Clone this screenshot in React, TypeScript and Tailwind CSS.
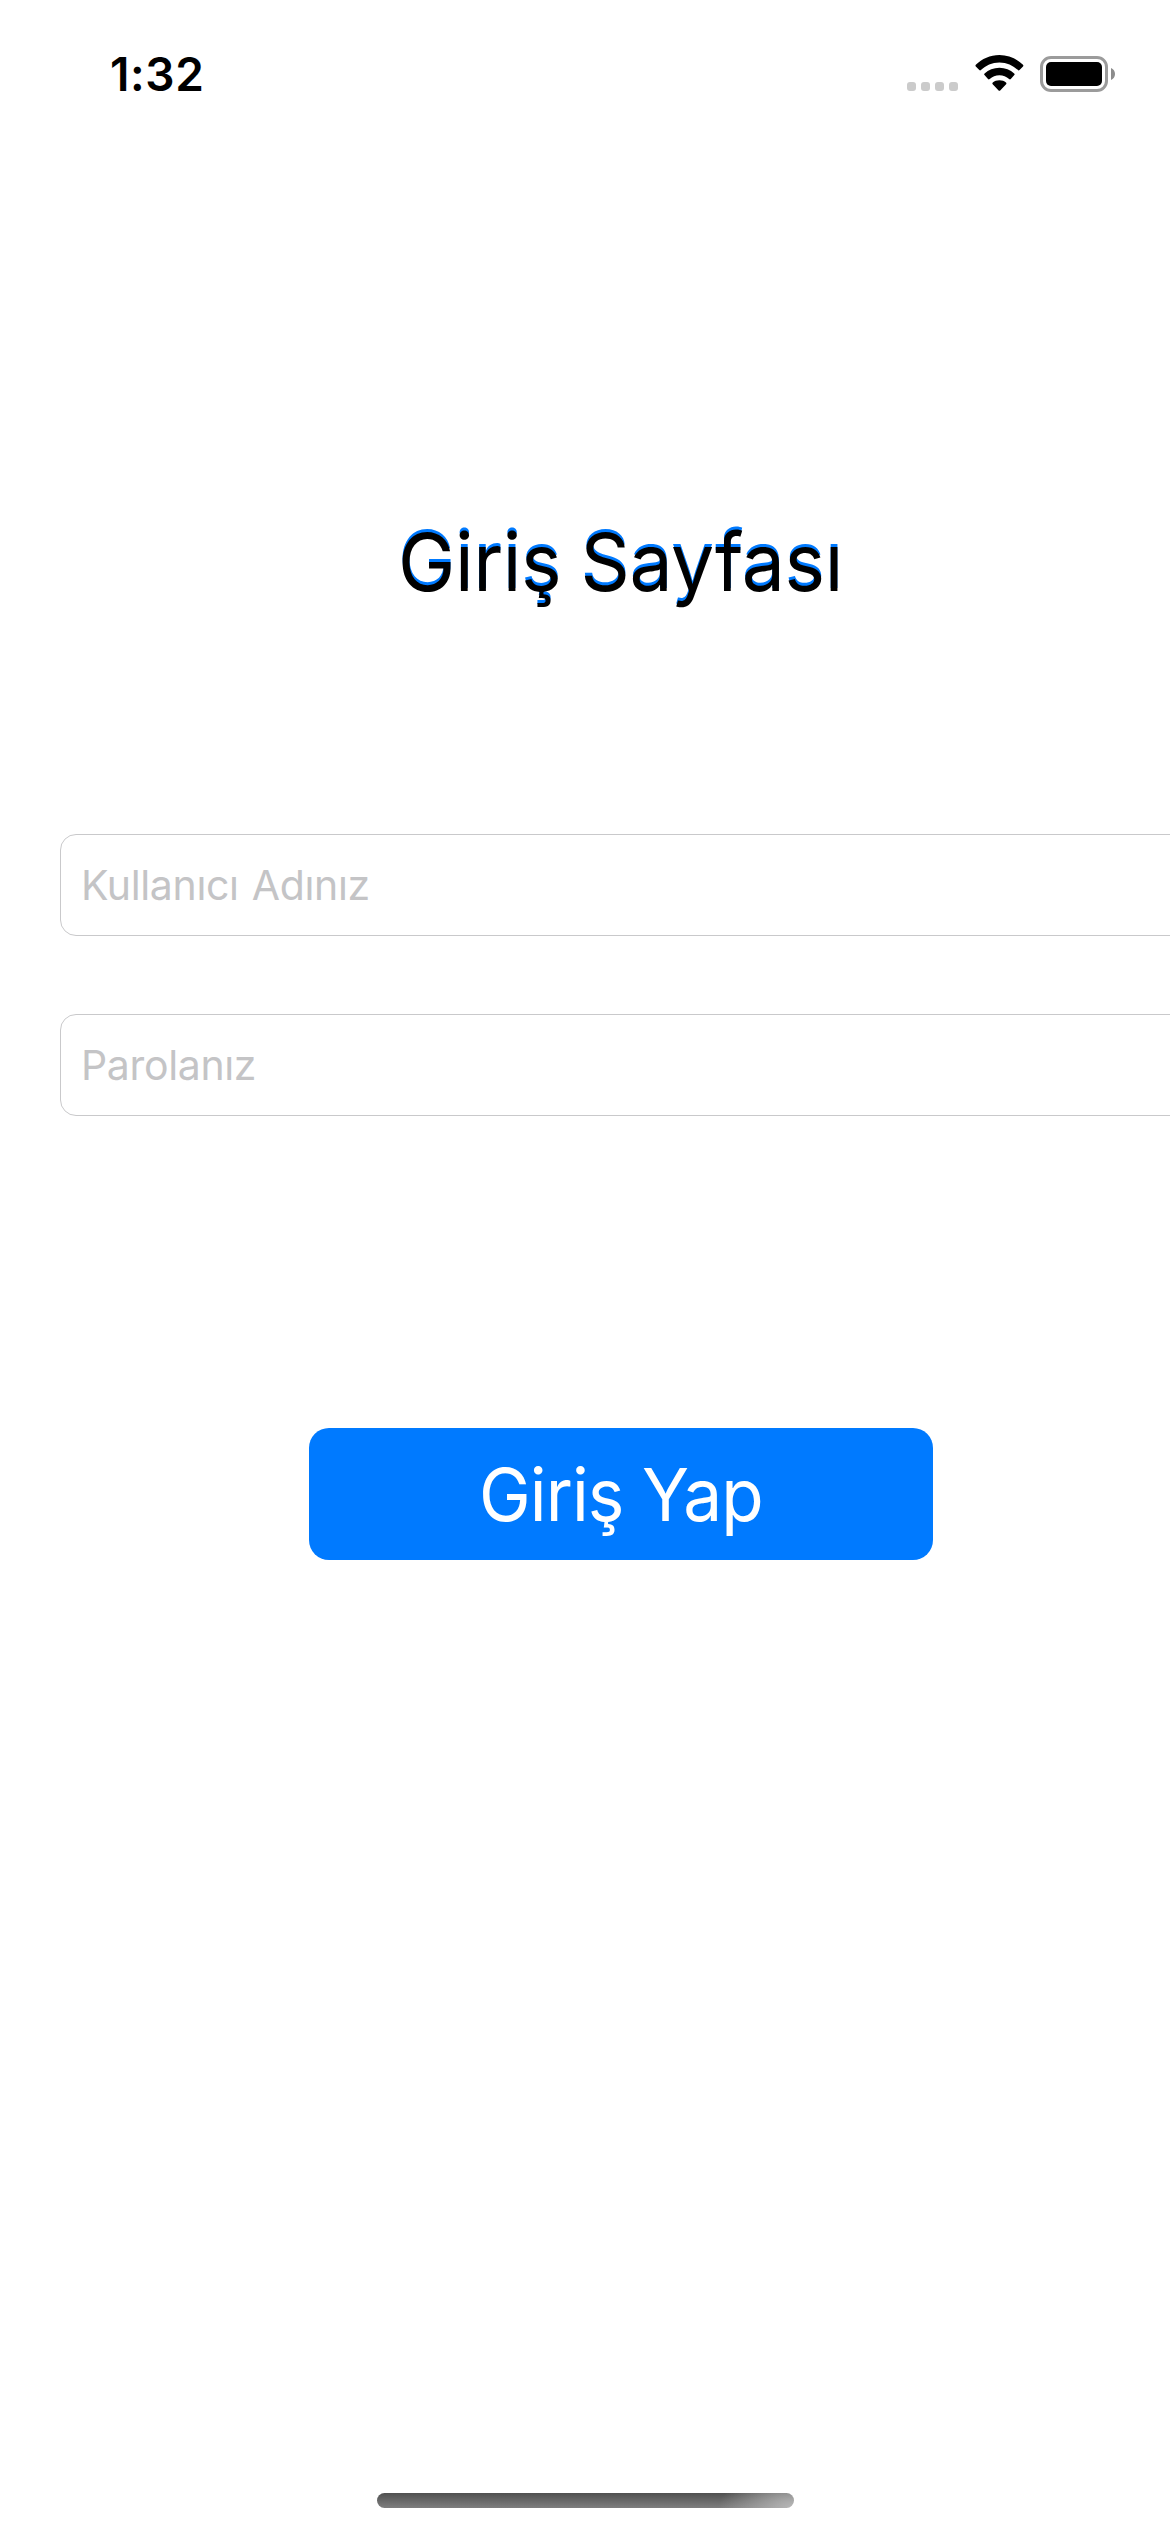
function SignalDots() {
  return (
    <div className="flex gap-[5px]">
      {[0, 1, 2, 3].map((i) => (
        <span key={i} className="size-[9px] rounded-[3px] bg-[#cbcbcb]" />
      ))}
    </div>
  );
}

function WifiIcon() {
  return (
    <svg className="h-[36px] w-[49px]" viewBox="0 0 49 36" fill="#000">
      <path d="M24.4 0C33.6 0 41.9 3.9 48 9.8C48.5 10.3 48.5 10.9 48 11.4L44.5 15C44 15.5 43.400 15.500 42.900 15C38 10.400 31.800 7.400 24.400 7.400C17 7.400 10.800 10.400 5.900 15C5.400 15.500 4.800 15.500 4.300 15L.8 11.400C.3 10.900 .3 10.300 .8 9.800C6.900 3.900 15.200 0 24.400 0Z" />
      <path d="M24.400 12.800C30.200 12.800 35.300 14.900 39.200 18.500C39.800 19 39.800 19.600 39.300 20.100L35.800 24C35.300 24.500 34.700 24.500 34.100 24C31.500 21.700 28.100 20.300 24.400 20.300C20.700 20.300 17.300 21.700 14.700 24C14.100 24.500 13.500 24.500 13 24L9.500 20.100C9 19.600 9 19 9.600 18.500C13.500 14.900 18.600 12.800 24.400 12.800Z" />
      <path d="M24.400 25.300C27.100 25.300 29.300 26.100 31 27.600C31.600 28.100 31.600 28.700 31.100 29.200L25.200 35.400C24.700 35.900 24.100 35.900 23.600 35.400L17.700 29.200C17.200 28.700 17.200 28.100 17.800 27.600C19.500 26.100 21.700 25.300 24.400 25.300Z" />
    </svg>
  );
}

function BatteryIcon() {
  return (
    <div className="flex items-center gap-[3px]">
      <div className="h-[36px] w-[68px] rounded-[11px] border-[3px] border-[#9b9b9b] p-[3px]">
        <div className="h-full w-full rounded-[5px] bg-black" />
      </div>
      <svg className="h-[12px] w-[4px]" viewBox="0 0 4 12" fill="#8c8c8c">
        <path d="M0 0C2.400 1 4 3.300 4 6S2.400 11 0 12Z" />
      </svg>
    </div>
  );
}

function StatusBar() {
  return (
    <header className="flex h-[102px] items-start justify-between pt-[46px] pr-[55px] pl-[110px]">
      <time className="text-[46px] leading-[56px] font-semibold tracking-[0.6px]">1:32</time>
      <div className="flex items-start pt-[9px]">
        <div className="mt-[27px] mr-[17px]">
          <SignalDots />
        </div>
        <div className="mr-[16px]">
          <WifiIcon />
        </div>
        <div className="pt-px">
          <BatteryIcon />
        </div>
      </div>
    </header>
  );
}

function Field({ label, type }: { label: string; type: string }) {
  return (
    <input
      type={type}
      placeholder={label}
      className="h-[102px] w-[1170px] shrink-0 rounded-[16px] border border-[#c9c9cb] bg-white px-[20px] text-[41px] tracking-[-0.35px] outline-none [word-spacing:2px] placeholder:text-[#c4c4c6] placeholder:opacity-100"
    />
  );
}

export default function App() {
  return (
    <div className="flex h-[2532px] w-[1170px] flex-col overflow-hidden bg-white font-['Inter',sans-serif] text-black">
      <StatusBar />
      <main className="flex flex-1 flex-col items-start">
        <h1 className="mt-[410px] ml-[398px] origin-left scale-x-[0.96] text-[80px] leading-[100px] font-normal tracking-[-0.4px] whitespace-nowrap [text-shadow:0_-3px_0_#007aff] [word-spacing:-2px]">
          Giriş Sayfası
        </h1>
        <form className="mt-[222px] flex flex-col items-start pl-[60px]">
          <div className="flex flex-col gap-[78px]">
            <Field label="Kullanıcı Adınız" type="text" />
            <Field label="Parolanız" type="password" />
          </div>
          <button
            type="button"
            className="mt-[312px] ml-[249px] flex h-[132px] w-[624px] items-center rounded-[20px] bg-[#007aff] pl-[170px] text-[73px] leading-none tracking-[-1px] whitespace-nowrap text-white"
          >
            <span className="inline-block origin-left scale-x-95">Giriş Yap</span>
          </button>
        </form>
      </main>
      <footer className="flex h-[39px] justify-center">
        <div className="h-[15px] w-[417px] rounded-full bg-[radial-gradient(75px_40px_at_100%_100%,#b8b8b8_0%,#b8b8b800_100%),linear-gradient(to_bottom,#505050,#7e7e7e)]" />
      </footer>
    </div>
  );
}
